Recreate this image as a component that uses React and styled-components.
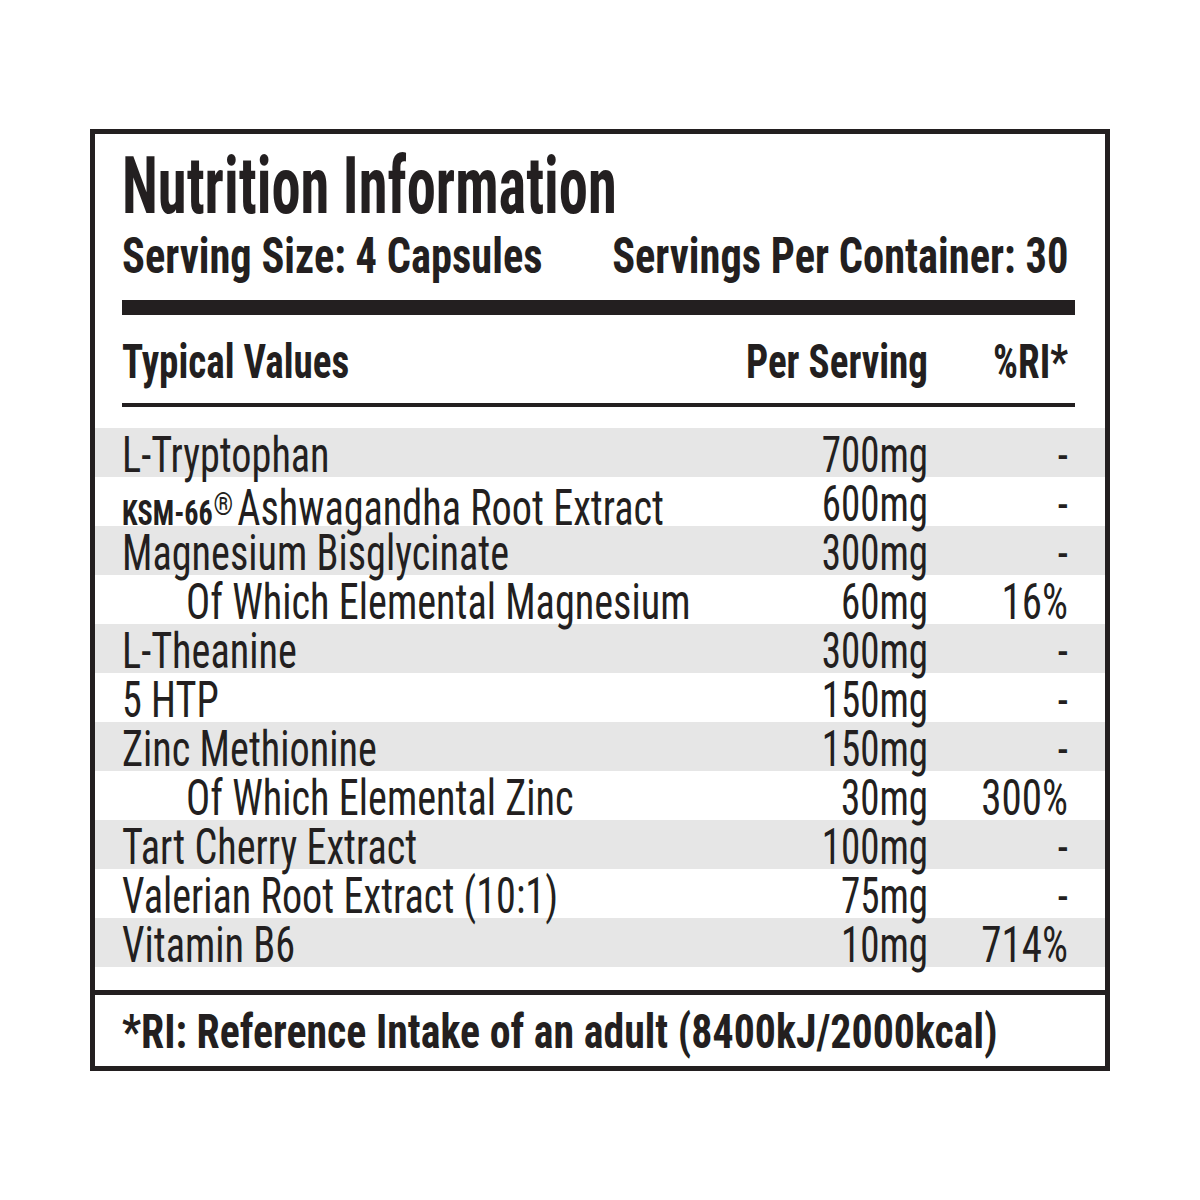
import React from "react";
import styled, { createGlobalStyle, css } from "styled-components";

const ink = "#231f20";
const band = "#e6e6e6";

const Global = createGlobalStyle`
  html, body { margin: 0; padding: 0; background: #ffffff; }
  body { font-family: Roboto, "Liberation Sans", sans-serif; color: ${ink}; }
`;

const condensed = css`
  font-family: Roboto, "Liberation Sans", sans-serif;
  font-stretch: 75%;
  white-space: nowrap;
`;

const squeeze = (sx) => css`
  transform: scaleX(${sx});
  transform-origin: ${(p) => (p.$end ? "right" : "left")} center;
  text-align: ${(p) => (p.$end ? "right" : "left")};
`;

const Page = styled.main`
  width: 1200px;
  height: 1200px;
  box-sizing: border-box;
  padding: 129px 0 0 90px;
`;

const Card = styled.section`
  width: 1020px;
  box-sizing: border-box;
  border: 5px solid ${ink};
  display: flex;
  flex-direction: column;
`;

const Head = styled.header`
  display: flex;
  flex-direction: column;
  padding: 12.5px 30px 0 27px;
`;

const Title = styled.h1`
  ${condensed};
  margin: 0;
  font-size: 79px;
  line-height: 79px;
  font-weight: 700;
  ${squeeze(0.741)};
`;

const ServingLine = styled.div`
  display: grid;
  grid-template-columns: minmax(0, 1fr) auto;
  margin-top: 5.5px;
  padding-right: 7px;
`;

const ServingText = styled.div`
  ${condensed};
  font-size: 50px;
  line-height: 50px;
  font-weight: 700;
  ${squeeze(0.849)};
`;

const Rule = styled.div`
  height: ${(p) => p.$weight}px;
  margin-top: ${(p) => p.$gap}px;
  background: ${ink};
`;

const tableGrid = css`
  display: grid;
  grid-template-columns: minmax(0, 1fr) 240px 140px;
  align-items: start;
`;

const ColumnHead = styled.div`
  ${tableGrid};
  margin: 21.5px 7px 0 0;
  height: 49px;
`;

const HeadCell = styled.div`
  ${condensed};
  font-size: 49px;
  line-height: 49px;
  font-weight: 700;
  ${squeeze(0.798)};
`;

const Rows = styled.div`
  display: flex;
  flex-direction: column;
  margin-top: 21px;
  padding-bottom: 23px;
`;

const Row = styled.div`
  ${tableGrid};
  height: 49px;
  box-sizing: border-box;
  padding: 6px 37px 0 27px;
  background: ${(p) => (p.$shade ? band : "transparent")};
`;

const cellText = css`
  ${condensed};
  font-size: 50px;
  line-height: 43px;
  font-weight: 400;
`;

const Name = styled.div`
  ${cellText};
  margin-left: ${(p) => (p.$indent ? 64 : 0)}px;
  ${squeeze(0.805)};
`;

const Amount = styled.div`
  ${cellText};
  ${squeeze(0.78)};
`;

const Ri = styled.div`
  ${cellText};
  ${squeeze(0.82)};
`;

const Brand = styled.span`
  font-size: 35px;
  font-weight: 700;
`;

const Registered = styled.span`
  font-size: 31px;
  font-weight: 400;
  vertical-align: 10px;
  margin: 0 5px 0 1px;
`;

const Footer = styled.footer`
  border-top: 5px solid ${ink};
  padding: 12px 27px 10px;
`;

const FootNote = styled.p`
  ${condensed};
  margin: 0;
  font-size: 49px;
  line-height: 49px;
  font-weight: 700;
  ${squeeze(0.854)};
`;

const items = [
  { name: "L-Tryptophan", amount: "700mg", ri: "-" },
  { name: "Ashwagandha Root Extract", brand: "KSM-66", amount: "600mg", ri: "-" },
  { name: "Magnesium Bisglycinate", amount: "300mg", ri: "-" },
  { name: "Of Which Elemental Magnesium", amount: "60mg", ri: "16%", sub: true },
  { name: "L-Theanine", amount: "300mg", ri: "-" },
  { name: "5 HTP", amount: "150mg", ri: "-" },
  { name: "Zinc Methionine", amount: "150mg", ri: "-" },
  { name: "Of Which Elemental Zinc", amount: "30mg", ri: "300%", sub: true },
  { name: "Tart Cherry Extract", amount: "100mg", ri: "-" },
  { name: "Valerian Root Extract (10:1)", amount: "75mg", ri: "-" },
  { name: "Vitamin B6", amount: "10mg", ri: "714%" },
];

export default function App() {
  return (
    <Page>
      <Global />
      <Card>
        <Head>
          <Title>Nutrition Information</Title>
          <ServingLine>
            <ServingText>Serving Size: 4 Capsules</ServingText>
            <ServingText $end>Servings Per Container: 30</ServingText>
          </ServingLine>
          <Rule $weight={15} $gap={19} />
          <ColumnHead>
            <HeadCell>Typical Values</HeadCell>
            <HeadCell $end>Per Serving</HeadCell>
            <HeadCell $end>%RI*</HeadCell>
          </ColumnHead>
          <Rule $weight={4} $gap={17.5} />
        </Head>
        <Rows>
          {items.map((it, i) => (
            <Row key={it.name} $shade={i % 2 === 0}>
              <Name $indent={it.sub}>
                {it.brand && (
                  <>
                    <Brand>{it.brand}</Brand>
                    <Registered>®</Registered>
                  </>
                )}
                {it.name}
              </Name>
              <Amount $end>{it.amount}</Amount>
              <Ri $end>{it.ri}</Ri>
            </Row>
          ))}
        </Rows>
        <Footer>
          <FootNote>*RI: Reference Intake of an adult (8400kJ/2000kcal)</FootNote>
        </Footer>
      </Card>
    </Page>
  );
}
